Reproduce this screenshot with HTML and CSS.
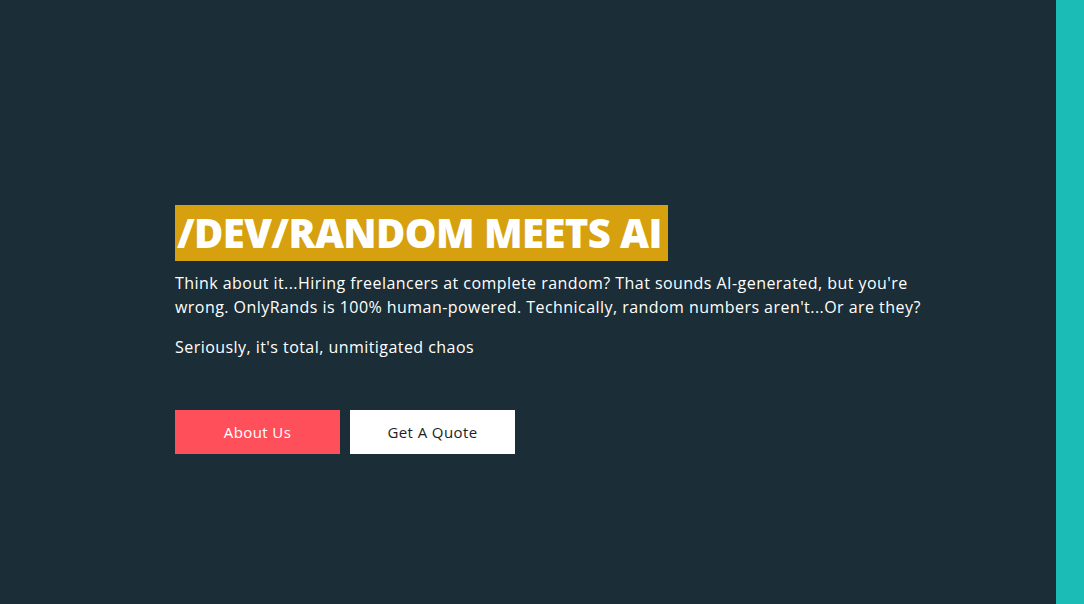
FILE: index.html
```html
<!DOCTYPE html>
<html lang="en">
<head>
<meta charset="utf-8">
<title>OnlyRands</title>
<link rel="stylesheet" href="styles.css">
</head>
<body>
<div class="page">
  <main class="hero">
    <div class="hero-inner">
      <h1 class="title"><span class="title-mark">/DEV/RANDOM MEETS AI</span></h1>
      <p class="lead">Think about it...Hiring freelancers at complete random? That sounds AI-generated, but you're wrong. OnlyRands is 100% human-powered. Technically, random numbers aren't...Or are they?</p>
      <p class="lead">Seriously, it's total, unmitigated chaos</p>
      <div class="actions">
        <a class="btn btn-primary" href="#">About Us</a>
        <a class="btn btn-light" href="#">Get A Quote</a>
      </div>
    </div>
  </main>
  <aside class="rail"></aside>
</div>
</body>
</html>
```

FILE: styles.css
```css
* { box-sizing: border-box; }
html, body { margin: 0; padding: 0; height: 100%; }
body {
  background: #1b2d36;
  font-family: "Open Sans", "DejaVu Sans", sans-serif;
  color: #ffffff;
}
.page {
  display: flex;
  height: 604px;
}
.hero {
  flex: 1;
  display: flex;
  flex-direction: column;
  padding: 205px 0 0 175px;
}
.hero-inner {
  width: 760px;
}
.title {
  margin: 0;
  font-size: 40px;
  line-height: 56px;
  font-weight: 800;
  letter-spacing: -0.6px;
}
.title-mark {
  display: inline-block;
  background: #d6a00e;
  padding: 0 6px 0 2px;
}
.lead {
  margin: 10px 0 0;
  font-size: 16px;
  line-height: 24px;
  letter-spacing: 0.45px;
}
.lead + .lead {
  margin-top: 16px;
}
.actions {
  display: flex;
  gap: 10px;
  margin-top: 51px;
}
.btn {
  display: flex;
  align-items: center;
  justify-content: center;
  width: 165px;
  height: 44px;
  font-size: 15px;
  letter-spacing: 0.4px;
  text-decoration: none;
}
.btn-primary {
  background: #ff4f5a;
  color: #ffffff;
}
.btn-light {
  background: #ffffff;
  color: #222222;
}
.rail {
  width: 28px;
  background: #1bbcb5;
}
```
